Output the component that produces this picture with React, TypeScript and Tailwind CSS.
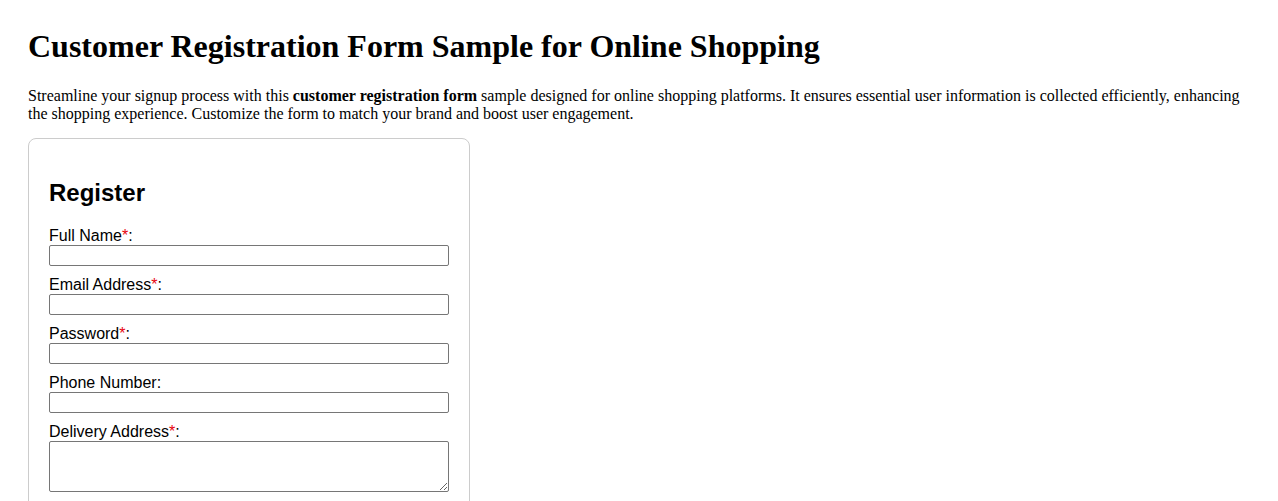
import type { ReactNode } from "react";

interface FieldProps {
  label: string;
  required?: boolean;
  children: ReactNode;
}

const Field = ({ label, required, children }: FieldProps) => (
  <div className="flex flex-col">
    <label className="block text-[16px] leading-[18px] text-black">
      {label}
      {required && <span className="text-red-600">*</span>}:
    </label>
    {children}
  </div>
);

const inputClass =
  "block w-[400px] h-[21px] border border-[#767676] rounded-[2px] bg-white mb-[10px] px-[2px] text-[13px] outline-none";

const App = () => {
  return (
    <div className="min-h-screen bg-white px-[28px] pt-[28px] text-black font-['Liberation_Serif','Times_New_Roman',serif]">
      <h1 className="text-[32px] font-bold leading-[normal] mb-[22px]">
        Customer Registration Form Sample for Online Shopping
      </h1>

      <p className="text-[16px] leading-[17.5px] mb-[16px]">
        Streamline your signup process with this <strong>customer registration form</strong> sample designed
        for online shopping platforms. It ensures essential user information is collected efficiently,
        enhancing the shopping experience. Customize the form to match your brand and boost user engagement.
      </p>

      <form className="w-[442px] border border-[#cccccc] rounded-[8px] p-[20px] font-['Liberation_Sans',Arial,sans-serif]">
        <h2 className="text-[24px] font-bold leading-[normal] mt-[20px] mb-[20px]">Register</h2>

        <Field label="Full Name" required>
          <input type="text" className={inputClass} />
        </Field>
        <Field label="Email Address" required>
          <input type="email" className={inputClass} />
        </Field>
        <Field label="Password" required>
          <input type="password" className={inputClass} />
        </Field>
        <Field label="Phone Number">
          <input type="tel" className={inputClass} />
        </Field>
        <Field label="Delivery Address" required>
          <textarea className="block w-[400px] h-[51px] border border-[#767676] rounded-[2px] bg-white mb-[10px] px-[2px] text-[13px] outline-none resize" />
        </Field>
      </form>
    </div>
  );
};

export default App;
